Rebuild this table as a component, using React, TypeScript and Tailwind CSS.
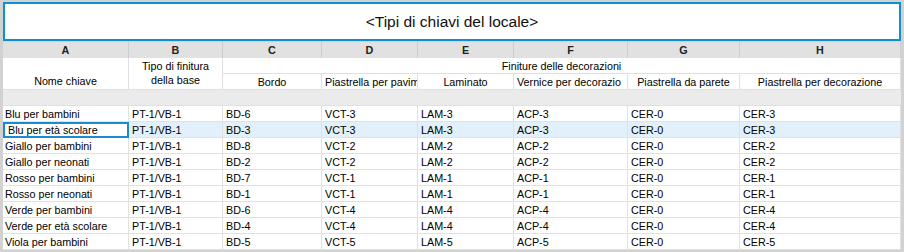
import React from "react";

const rows: string[][] = [
  ["Blu per bambini", "PT-1/VB-1", "BD-6", "VCT-3", "LAM-3", "ACP-3", "CER-0", "CER-3"],
  ["Blu per età scolare", "PT-1/VB-1", "BD-3", "VCT-3", "LAM-3", "ACP-3", "CER-0", "CER-3"],
  ["Giallo per bambini", "PT-1/VB-1", "BD-8", "VCT-2", "LAM-2", "ACP-2", "CER-0", "CER-2"],
  ["Giallo per neonati", "PT-1/VB-1", "BD-2", "VCT-2", "LAM-2", "ACP-2", "CER-0", "CER-2"],
  ["Rosso per bambini", "PT-1/VB-1", "BD-7", "VCT-1", "LAM-1", "ACP-1", "CER-0", "CER-1"],
  ["Rosso per neonati", "PT-1/VB-1", "BD-1", "VCT-1", "LAM-1", "ACP-1", "CER-0", "CER-1"],
  ["Verde per bambini", "PT-1/VB-1", "BD-6", "VCT-4", "LAM-4", "ACP-4", "CER-0", "CER-4"],
  ["Verde per età scolare", "PT-1/VB-1", "BD-4", "VCT-4", "LAM-4", "ACP-4", "CER-0", "CER-4"],
  ["Viola per bambini", "PT-1/VB-1", "BD-5", "VCT-5", "LAM-5", "ACP-5", "CER-0", "CER-5"],
];

const letters = ["A", "B", "C", "D", "E", "F", "G", "H"];

export default function App() {
  return (
    <div
      className="w-[904px] h-[252px] bg-[#d2d2d2] pt-[2px] pl-[3px] pr-[3px] pb-[2px] flex flex-col gap-[1px] text-black"
      style={{ fontFamily: '"Liberation Sans", Arial, sans-serif' }}
    >
      <div className="h-[39px] border-2 border-[#0f8fd4] bg-white flex items-center justify-center text-[15.5px] text-[#111]">
        &lt;Tipi di chiavi del locale&gt;
      </div>
      <div className="grid grid-cols-[126px_94px_99px_96px_96px_114px_112px_161px] auto-rows-[16px] bg-white text-[10.75px] leading-[16px]">
        {letters.map((l) => (
          <div
            key={l}
            className="bg-[#e1e1e1] border-r border-[#cdcdcd] flex items-center justify-center font-bold text-[#222]"
          >
            {l}
          </div>
        ))}
        <div className="row-span-2 border-r border-b border-[#e0e0e0] flex items-end justify-center">
          <span className="leading-[16px]">Nome chiave</span>
        </div>
        <div className="row-span-2 border-r border-b border-[#e0e0e0] flex flex-col items-center justify-center leading-[14px] pb-[1px]">
          <span>Tipo di finitura</span>
          <span>della base</span>
        </div>
        <div className="col-span-6 border-r border-b border-[#e0e0e0] flex items-center justify-center">
          Finiture delle decorazioni
        </div>
        <div className="border-r border-b border-[#e0e0e0] flex items-center justify-center overflow-hidden whitespace-nowrap">
          Bordo
        </div>
        <div className="border-r border-b border-[#e0e0e0] pl-[3px] overflow-hidden whitespace-nowrap">
          Piastrella per pavim
        </div>
        <div className="border-r border-b border-[#e0e0e0] flex items-center justify-center overflow-hidden whitespace-nowrap">
          Laminato
        </div>
        <div className="border-r border-b border-[#e0e0e0] pl-[3px] overflow-hidden whitespace-nowrap">
          Vernice per decorazio
        </div>
        <div className="border-r border-b border-[#e0e0e0] flex items-center justify-center overflow-hidden whitespace-nowrap">
          Piastrella da parete
        </div>
        <div className="border-r border-b border-[#e0e0e0] flex items-center justify-center overflow-hidden whitespace-nowrap">
          Piastrella per decorazione
        </div>
        <div className="col-span-8 bg-[#ebebeb] border-b border-[#e0e0e0]" />
        {rows.map((r, ri) => {
          const sel = ri === 1;
          return r.map((c, ci) => {
            if (sel && ci === 0) {
              return (
                <div
                  key={`${ri}-${ci}`}
                  className="border-2 border-[#1a8bd3] bg-white pl-[3px] leading-[12px] overflow-hidden whitespace-nowrap"
                >
                  {c}
                </div>
              );
            }
            return (
              <div
                key={`${ri}-${ci}`}
                className={`border-r border-b border-[#e1e1e1] overflow-hidden whitespace-nowrap ${
                  ci === 0 ? "pl-[2px]" : "pl-[3px]"
                } ${sel ? "bg-[#e1f0fa]" : "bg-white"}`}
              >
                {c}
              </div>
            );
          });
        })}
      </div>
    </div>
  );
}
